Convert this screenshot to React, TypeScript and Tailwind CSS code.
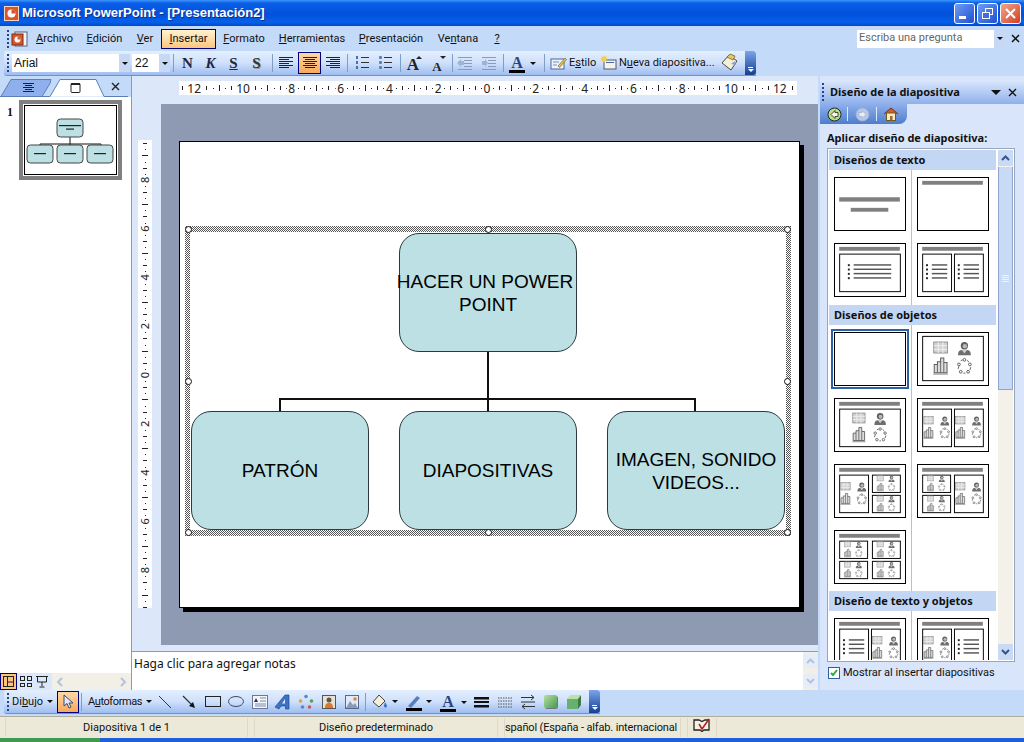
import type { ReactNode } from 'react';

const ui = "font-['Roboto',sans-serif] text-[11px] text-[#111]";
const bold = "font-['Noto_Sans',sans-serif] text-[11px] font-bold";

function Grip() {
  return (
    <div className="flex w-[3px] flex-col gap-[2px] py-[2px]">
      {[0, 1, 2, 3, 4].map((i) => (
        <span key={i} className="h-[2px] w-[2px] bg-[#27418a]" />
      ))}
    </div>
  );
}

function Sep({ ml = 'ml-0' }: { ml?: string }) {
  return <span className={`h-[18px] w-px bg-[#7f9dc9] ${ml}`} />;
}

function Handle() {
  return (
    <div className="flex h-full w-[11px] flex-col items-center justify-end rounded-r-[3px] bg-linear-to-b from-[#7ba5ea] to-[#173f91] pb-[3px]">
      <span className="mb-[1px] h-px w-[5px] bg-white" />
      <span className="h-0 w-0 border-x-[3px] border-t-[3px] border-x-transparent border-t-white" />
    </div>
  );
}

function Caret({ cls = 'border-t-[#111]' }: { cls?: string }) {
  return <span className={`inline-block h-0 w-0 border-x-[3px] border-t-[3px] border-x-transparent ${cls}`} />;
}

function Btn({ w = 'w-[23px]', active = false, children }: { w?: string; active?: boolean; children: ReactNode }) {
  return (
    <div
      className={`flex h-[22px] shrink-0 items-center justify-center ${w} ${
        active ? 'border border-[#000080] bg-linear-to-b from-[#fdd9a4] to-[#f8a85a]' : ''
      }`}
    >
      {children}
    </div>
  );
}

function Lines({ rows }: { rows: [number, number][] }) {
  return (
    <svg width="16" height="16" viewBox="0 0 16 16">
      {rows.map(([x, w], i) => (
        <rect key={i} x={x} y={2 + i * 2} width={w} height="1" fill="#222" />
      ))}
    </svg>
  );
}

function ListIcon({ numbered }: { numbered?: boolean }) {
  return (
    <svg width="16" height="16" viewBox="0 0 16 16">
      {[2, 7, 12].map((y) => (
        <g key={y}>
          <rect x="7" y={y} width="8" height="1" fill="#333" />
          {numbered ? (
            <rect x="2" y={y - 1} width="2" height="3" fill="#4a6ea9" />
          ) : (
            <rect x="2" y={y - 1} width="3" height="3" rx="1" fill="#5b7fb5" />
          )}
        </g>
      ))}
    </svg>
  );
}

function IndentIcon({ flip }: { flip?: boolean }) {
  return (
    <svg width="18" height="16" viewBox="0 0 18 16">
      {[2, 5, 8, 11, 14].map((y, i) => (
        <rect key={y} x={i > 0 && i < 4 ? 8 : 2} y={y} width={i > 0 && i < 4 ? 8 : 14} height="1" fill="#8a9bb5" />
      ))}
      <path d={flip ? 'M2 6h3V4l3 4-3 4v-2H2z' : 'M8 6H5V4L1 8l4 4v-2h3z'} fill="#9fb4d4" />
    </svg>
  );
}

function Big({ small, up }: { small?: boolean; up?: boolean }) {
  return (
    <div className="relative flex h-[20px] w-[18px] items-end justify-center">
      <span className={`font-['Liberation_Serif',serif] font-bold leading-none text-[#222] ${small ? 'text-[13px]' : 'text-[17px]'}`}>A</span>
      <span className={`absolute right-0 top-[3px] h-0 w-0 border-x-[3px] border-x-transparent ${up ? 'border-b-[3px] border-b-[#222]' : 'border-t-[3px] border-t-[#222]'}`} />
    </div>
  );
}

function ColorA({ bar = '#000' }: { bar?: string }) {
  return (
    <div className="flex h-[20px] w-[16px] flex-col items-center justify-end">
      <span className="font-['Liberation_Serif',serif] text-[16px] font-bold leading-[15px] text-[#25447f]">A</span>
      <span className="h-[3px] w-[16px]" style={{ backgroundColor: bar }} />
    </div>
  );
}

function FormatBar() {
  return (
    <div className="flex h-[25px] items-center bg-[#c3daf9] pl-[4px]">
      <div className="flex h-full w-[752px] items-center rounded-l-[3px] border-b border-[#6f93c9] bg-linear-to-b from-[#e3effe] via-[#cfe0fb] to-[#9ebdf0] pl-[3px]">
        <Grip />
        <div className="ml-[2px] flex h-[18px] w-[118px] items-center justify-between bg-white">
          <span className="pl-[2px] font-['Liberation_Sans',sans-serif] text-[12px]">Arial</span>
          <span className="flex h-full w-[11px] items-center justify-center bg-[#c6d8f4]"><Caret /></span>
        </div>
        <div className="ml-[2px] flex h-[18px] w-[38px] items-center justify-between bg-white">
          <span className="pl-[3px] font-['Liberation_Sans',sans-serif] text-[12px]">22</span>
          <span className="flex h-full w-[11px] items-center justify-center bg-[#c6d8f4]"><Caret /></span>
        </div>
        <Sep ml="ml-[3px]" />
        <div className="ml-[2px] flex font-['Liberation_Serif',serif] text-[15px] font-bold text-[#1c2740]">
          <Btn><span>N</span></Btn>
          <Btn><span className="italic">K</span></Btn>
          <Btn><span className="underline">S</span></Btn>
          <Btn><span className="text-[#333] [text-shadow:1px_1px_0_#999]">S</span></Btn>
        </div>
        <Sep ml="ml-[4px]" />
        <Btn w="w-[24px] ml-[1px]"><Lines rows={[[1, 14], [1, 10], [1, 14], [1, 10], [1, 14], [1, 10]]} /></Btn>
        <Btn w="w-[23px]" active><Lines rows={[[1, 14], [3, 10], [1, 14], [3, 10], [1, 14], [3, 10]]} /></Btn>
        <Btn><Lines rows={[[1, 14], [5, 10], [1, 14], [5, 10], [1, 14], [5, 10]]} /></Btn>
        <Sep ml="ml-[3px]" />
        <Btn w="w-[23px] ml-[2px]"><ListIcon numbered /></Btn>
        <Btn><ListIcon /></Btn>
        <Sep ml="ml-[4px]" />
        <Btn w="w-[24px]"><Big up /></Btn>
        <Btn w="w-[24px]"><Big small /></Btn>
        <Sep ml="ml-[3px]" />
        <Btn w="w-[24px]"><IndentIcon /></Btn>
        <Btn w="w-[24px]"><IndentIcon flip /></Btn>
        <Sep ml="ml-[2px]" />
        <div className="ml-[5px] flex w-[32px] items-center gap-[5px]">
          <ColorA />
          <Caret />
        </div>
        <Sep ml="ml-[3px]" />
        <div className="ml-[5px] flex w-[47px] items-center gap-[2px]">
          <svg width="17" height="16" viewBox="0 0 17 16">
            <rect x="1" y="4" width="13" height="10" fill="#eef3fb" stroke="#4b6a9c" />
            <path d="M3 7h6M3 10h4" stroke="#7a8fb0" />
            <path d="M8 11l7-8 1.5 1.5-7 8z" fill="#e9c24a" stroke="#6b5a20" strokeWidth=".6" />
          </svg>
          <span className="pt-px">E<span className="underline">s</span>tilo</span>
        </div>
        <div className="ml-[3px] flex w-[118px] items-center gap-[2px]">
          <svg width="17" height="16" viewBox="0 0 17 16">
            <rect x="4" y="5" width="12" height="9" fill="#f4f4ee" stroke="#4b5a74" />
            <rect x="6" y="7" width="8" height="1" fill="#4b6a9c" />
            <path d="M4 0l1 2 2-1-1 2 2 1-2 1 1 2-2-1-1 2-1-2-2 1 1-2-2-1 2-1-1-2 2 1z" fill="#f2cf4e" />
          </svg>
          <span className="whitespace-nowrap pt-px">N<span className="underline">u</span>eva diapositiva...</span>
        </div>
        <svg className="ml-[2px]" width="20" height="20" viewBox="0 0 20 20">
          <path d="M2 10l7-8 8 6-6 9z" fill="#f4efd8" stroke="#4a4a4a" />
          <path d="M7 4l3-3 5 2-2 4z" fill="#e8c85e" stroke="#5f5a2a" strokeWidth=".7" />
          <path d="M11 11l4-3 1 4z" fill="#88a3cf" />
        </svg>
        <div className="ml-auto h-full"><Handle /></div>
      </div>
    </div>
  );
}

function MenuBar() {
  const items: [ReactNode, string][] = [
    [<><u>A</u>rchivo</>, 'w-[51px]'],
    [<><u>E</u>dición</>, 'w-[49px]'],
    [<><u>V</u>er</>, 'w-[32px]'],
    [<><u>I</u>nsertar</>, 'w-[55px]'],
    [<><u>F</u>ormato</>, 'w-[56px]'],
    [<><u>H</u>erramientas</>, 'w-[80px]'],
    [<><u>P</u>resentación</>, 'w-[78px]'],
    [<>Ve<u>n</u>tana</>, 'w-[56px]'],
    [<u>?</u>, 'w-[22px]'],
  ];
  return (
    <div className="flex h-[25px] items-center bg-[#c3daf9] pl-[7px]">
      <Grip />
      <svg className="ml-[1px]" width="18" height="18" viewBox="0 0 18 18">
        <rect x="4" y="2" width="12" height="14" fill="#f6f6f6" stroke="#56607a" />
        <rect x="1" y="4" width="11" height="11" fill="#d9562b" stroke="#7a2c10" />
        <circle cx="6.5" cy="9.5" r="3" fill="#fff" />
        <path d="M6.5 9.5V6.5a3 3 0 0 1 3 3z" fill="#d9562b" />
      </svg>
      <div className="flex">
        {items.map(([label, w], i) => (
          <div
            key={i}
            className={`flex h-[20px] items-center justify-center pt-px ${w} ${
              i === 3 ? 'border border-[#000080] bg-linear-to-b from-[#fff3d0] to-[#fbc57e]' : ''
            }`}
          >
            <span className="whitespace-nowrap">{label}</span>
          </div>
        ))}
      </div>
      <div className="ml-auto flex h-[18px] w-[148px] items-center justify-between bg-white">
        <span className="pl-[2px] text-[#666]">Escriba una pregunta</span>
        <span className="flex h-full w-[11px] items-center justify-center bg-[#c6d8f4]"><Caret /></span>
      </div>
      <span className="ml-[3px] mr-[2px] flex w-[14px] justify-center">
        <svg width="9" height="9" viewBox="0 0 9 9"><path d="M1 1l7 7M8 1L1 8" stroke="#111" strokeWidth="1.5" /></svg>
      </span>
    </div>
  );
}

function WinBtn({ red, children }: { red?: boolean; children: ReactNode }) {
  return (
    <div
      className={`flex h-[21px] w-[21px] items-center justify-center rounded-[3px] border border-white ${
        red ? 'bg-linear-to-br from-[#f0a48c] to-[#d2391a]' : 'bg-linear-to-br from-[#6f9cf4] to-[#1f4fd0]'
      }`}
    >
      {children}
    </div>
  );
}

function TitleBar() {
  return (
    <div className="flex h-[26px] items-center bg-[linear-gradient(#3d95ff_0%,#0a5fe6_12%,#0250dc_55%,#0560ea_85%,#0048c8_100%)] pl-[4px] pr-[3px]">
      <svg width="15" height="15" viewBox="0 0 15 15">
        <rect x=".5" y=".5" width="14" height="14" fill="#d9562b" stroke="#f7d5c4" />
        <circle cx="7.5" cy="7.5" r="4" fill="#fff" />
        <path d="M7.5 7.5v-4a4 4 0 0 1 4 4z" fill="#d9562b" />
      </svg>
      <span className="ml-[3px] whitespace-nowrap font-['Liberation_Sans',sans-serif] text-[13px] font-bold text-white [text-shadow:1px_1px_0_#0a2f8a]">
        Microsoft PowerPoint - [Presentación2]
      </span>
      <div className="ml-auto flex gap-[2px]">
        <WinBtn><span className="mt-[8px] mr-[4px] h-[3px] w-[7px] bg-white" /></WinBtn>
        <WinBtn>
          <svg width="13" height="13" viewBox="0 0 13 13" fill="none" stroke="#fff">
            <rect x="4.5" y="1.5" width="7" height="6" /><rect x="1.5" y="5.5" width="7" height="6" fill="#3d6fe0" />
          </svg>
        </WinBtn>
        <WinBtn red>
          <svg width="11" height="11" viewBox="0 0 11 11"><path d="M1 1l9 9M10 1l-9 9" stroke="#fff" strokeWidth="2" /></svg>
        </WinBtn>
      </div>
    </div>
  );
}

function LeftPanel() {
  return (
    <div className="flex h-full w-[132px] shrink-0 flex-col border-r border-[#7f9dc9]">
      <div className="flex h-[21px] bg-[#c3daf9] pt-[3px]">
        <svg width="128" height="18" viewBox="0 0 128 18">
          <path d="M1 17.5L11 .5h40l-1 4-8 13z" fill="#8fb0ec" stroke="#5c7fb8" />
          <path d="M50 17.5L60 .5h36l8 17" fill="#fff" stroke="#5c7fb8" />
          <rect x="0" y="17" width="50" height="1" fill="#5c7fb8" />
          <rect x="104" y="17" width="24" height="1" fill="#5c7fb8" />
          {[4, 6, 8, 10, 12].map((y, i) => (
            <rect key={y} x={i % 2 ? 25 : 23} y={y} width={i % 2 ? 7 : 11} height="1" fill="#222" />
          ))}
          <rect x="71" y="4.5" width="9" height="9" rx="1" fill="#fff" stroke="#222" />
          <rect x="71" y="4" width="9" height="2" fill="#222" />
          <path d="M112 4l7 7M119 4l-7 7" stroke="#222" strokeWidth="1.4" />
        </svg>
      </div>
      <div className="flex flex-1 items-start bg-white pl-[7px] pt-[3px]">
        <span className="mt-[3px] font-['Liberation_Serif',serif] text-[12px] font-bold">1</span>
        <div className="ml-[6px] border-[4px] border-[#808080] bg-white p-px">
          <svg className="block" width="93" height="70" viewBox="0 0 93 70">
            <rect x=".5" y=".5" width="92" height="69" fill="#fff" stroke="#000" />
            <path d="M46 32v7M16 44v-5h61v5M46 39v5" fill="none" stroke="#111" />
            {[[33, 14], [3, 40], [33, 40], [63, 40]].map(([x, y], i) => (
              <g key={i}>
                <rect x={x} y={y} width="26" height="18" rx="3.5" fill="#bce0e3" stroke="#444" />
                <rect x={x + (i === 0 ? 2 : 7)} y={y + (i === 0 ? 6 : 8)} width={i === 0 ? 22 : 12} height="1.2" fill="#222" />
                {i === 0 && <rect x={x + 9} y={y + 9.5} width="8" height="1.2" fill="#222" />}
              </g>
            ))}
          </svg>
        </div>
      </div>
      <div className="flex h-[17px] items-center bg-[#dbe7fb]">
        <div className="flex h-[17px] w-[17px] items-center justify-center border border-[#000080] bg-[#fbc57e]">
          <svg width="13" height="13" viewBox="0 0 13 13" fill="none" stroke="#222"><rect x="1.5" y="1.5" width="10" height="10" /><path d="M5.5 2v9M5.5 7h6" /></svg>
        </div>
        <svg className="ml-[2px]" width="14" height="13" viewBox="0 0 14 13" fill="none" stroke="#222"><rect x="1.5" y="1.5" width="4" height="4" /><rect x="8.5" y="1.5" width="4" height="4" /><rect x="1.5" y="8.5" width="4" height="3" /><rect x="8.5" y="8.5" width="4" height="3" /></svg>
        <svg className="ml-[2px]" width="14" height="13" viewBox="0 0 14 13" fill="none" stroke="#222"><path d="M1 1.5h12M2.5 2v5h9V2M7 7v4M4.5 12h5" /></svg>
        <div className="ml-auto flex h-full w-[79px] items-center justify-between bg-[#f1efe6] px-[4px]">
          <svg width="8" height="10" viewBox="0 0 8 10" fill="none" stroke="#b4c3dc" strokeWidth="2"><path d="M6 1L2 5l4 4" /></svg>
          <svg width="8" height="10" viewBox="0 0 8 10" fill="none" stroke="#b4c3dc" strokeWidth="2"><path d="M2 1l4 4-4 4" /></svg>
        </div>
      </div>
    </div>
  );
}

function RulerH() {
  // one mark every 6.1px, numbers every 48.8px
  const marks = Array.from({ length: 101 }, (_, i) => i - 50);
  return (
    <svg className="block" width="618" height="14" viewBox="0 0 618 14">
      <rect width="618" height="14" fill="#fff" />
      {marks.map((m) => {
        const x = Math.round(308 + m * 6.1);
        if (m % 8 === 0) return null;
        if (m % 2 !== 0) return <rect key={m} x={x} y="7" width="1" height="1" fill="#222" />;
        return <rect key={m} x={x} y={m % 4 === 0 ? 4 : 5} width="1" height={m % 4 === 0 ? 6 : 4} fill="#222" />;
      })}
      {[12, 10, 8, 6, 4, 2, 0, 2, 4, 6, 8, 10, 12].map((n, i) => (
        <g key={i}>
          <rect x={308 + (i - 6) * 48.8 - (n > 9 ? 8 : 5)} y="0" width={n > 9 ? 16 : 10} height="14" fill="#fff" />
          <text x={308 + (i - 6) * 48.8} y="11.500" textAnchor="middle" fontSize="12" fontFamily="'Noto Sans',sans-serif" fill="#222">
            {n}
          </text>
        </g>
      ))}
    </svg>
  );
}

function RulerV() {
  const marks = Array.from({ length: 77 }, (_, i) => i - 38);
  return (
    <svg className="block" width="14" height="468" viewBox="0 0 14 468">
      <rect width="14" height="468" fill="#fff" />
      {marks.map((m) => {
        const y = Math.round(235 + m * 6.1);
        if (m % 8 === 0) return null;
        if (m % 2 !== 0) return <rect key={m} x="7" y={y} width="1" height="1" fill="#222" />;
        return <rect key={m} x={m % 4 === 0 ? 4 : 5} y={y} width={m % 4 === 0 ? 6 : 4} height="1" fill="#222" />;
      })}
      {[8, 6, 4, 2, 0, 2, 4, 6, 8].map((n, i) => {
        const y = 235 + (i - 4) * 48.8;
        return (
          <text key={i} x="7" y={y} transform={`rotate(-90 7 ${y})`} dy="4" textAnchor="middle" fontSize="11" fontFamily="'Noto Sans',sans-serif" fill="#222">
            {n}
          </text>
        );
      })}
    </svg>
  );
}

function Node({ children }: { children: ReactNode }) {
  return (
    <div className="flex h-[119px] w-[178px] items-center justify-center rounded-[20px] border border-[#2b3a40] bg-[#bce0e3] text-center font-['Liberation_Sans',sans-serif] text-[19px] leading-[23px] text-black">
      {children}
    </div>
  );
}

function Dot({ cls }: { cls: string }) {
  return <span className={`absolute h-[7px] w-[7px] rounded-full border border-[#111] bg-white ${cls}`} />;
}

function Slide() {
  return (
    <div className="ml-[18px] mt-[37px] h-[467px] w-[621px] border border-black bg-white pl-[5px] pt-[84px] shadow-[4px_4px_0_#000]">
      <div className="relative h-[310px] w-[606px] bg-[repeating-conic-gradient(#555_0_25%,#fff_0_50%)] bg-[length:2px_2px] px-[5px] py-[6px]">
        <div className="flex h-[298px] flex-col items-center bg-white px-px pt-px">
          <Node>
            <span className="whitespace-nowrap"><span className="pr-[6px]">HACER UN POWER</span><br />POINT</span>
          </Node>
          <svg className="block shrink-0" width="594" height="59" viewBox="0 0 594 59">
            <path d="M297 0v59M89 59V47h415v12" fill="none" stroke="#111" strokeWidth="2" />
          </svg>
          <div className="flex w-full justify-between">
            <Node>PATRÓN</Node>
            <Node>DIAPOSITIVAS</Node>
            <Node>
              <span>IMAGEN, SONIDO<br />VIDEOS...</span>
            </Node>
          </div>
        </div>
        <Dot cls="left-0 top-0" />
        <Dot cls="left-[300px] top-0" />
        <Dot cls="right-0 top-0" />
        <Dot cls="left-0 top-[152px]" />
        <Dot cls="right-0 top-[152px]" />
        <Dot cls="bottom-0 left-0" />
        <Dot cls="bottom-0 left-[300px]" />
        <Dot cls="bottom-0 right-0" />
      </div>
    </div>
  );
}

function Editor() {
  return (
    <div className="flex h-full w-[686px] shrink-0 flex-col bg-[#dce7fa]">
      <div className="h-[28px] pl-[47px] pt-[5px]">
        <RulerH />
      </div>
      <div className="flex h-[541px]">
        <div className="w-[29px] pl-[6px] pt-[36px]">
          <RulerV />
        </div>
        <div className="flex-1 bg-[#8e99b2]">
          <Slide />
        </div>
      </div>
      <div className="mt-[6px] flex flex-1 border-t border-[#7f9dc9] bg-white">
        <div className="flex-1 pl-[2px] pt-[3px]">
          <span className="font-['Noto_Sans',sans-serif] text-[12px]">Haga clic para agregar notas</span>
        </div>
        <div className="flex w-[15px] flex-col justify-between bg-[#f1efe6] py-[2px]">
          <span className="flex h-[14px] items-center justify-center bg-[#e6edf9]">
            <svg width="9" height="6" viewBox="0 0 9 6" fill="none" stroke="#b4c3dc" strokeWidth="2"><path d="M1 5l3.5-3.5L8 5" /></svg>
          </span>
          <span className="flex h-[14px] items-center justify-center bg-[#e6edf9]">
            <svg width="9" height="6" viewBox="0 0 9 6" fill="none" stroke="#b4c3dc" strokeWidth="2"><path d="M1 1l3.5 3.5L8 1" /></svg>
          </span>
        </div>
      </div>
    </div>
  );
}

// 42x36 glyph of the four content kinds: table, person, chart, cycle
function Glyph({ cx, cy, s }: { cx: number; cy: number; s: number }) {
  return (
    <g transform={`translate(${cx - 21 * s} ${cy - 18 * s}) scale(${s})`}>
      <rect x=".5" y=".5" width="15" height="12" fill="#d2d2d2" stroke="#8a8a8a" />
      <path d="M.5 4.500h15M.5 8.500h15M5.500.5v12M10.500.5v12" stroke="#f2f2f2" fill="none" />
      <path d="M27 15c0-5 2-6 7-6s7 1 7 6z" fill="#6e6e6e" />
      <path d="M31 9l3 4 3-4z" fill="#cfcfcf" />
      <circle cx="34" cy="4.500" r="4" fill="#5e5e5e" />
      <circle cx="34.500" cy="5" r="2.400" fill="#b8b8b8" />
      <path d="M1 34v-9h3.500v-3H8v-4h3.500v5H15v11z" fill="#dcdcdc" stroke="#5f5f5f" strokeWidth="1.100" />
      <path d="M4.500 25v9M8 22v12M11.500 23v11" stroke="#5f5f5f" />
      <path d="M0 35.500h16" stroke="#777" />
      {[[34, 20], [28, 25], [40, 25], [30, 33], [38, 33]].map(([x, y], i) => (
        <circle key={i} cx={x} cy={y} r="1.500" fill="#fff" stroke="#555" />
      ))}
      <path d="M30 21l2-1M37 20.500l2 2M41 28l-1 3M33 34.500h2M27 30l1-3" stroke="#555" fill="none" />
    </g>
  );
}

function Frame({ x, y, w, h, s }: { x: number; y: number; w: number; h: number; s: number }) {
  return (
    <g>
      <rect x={x + 0.5} y={y + 0.5} width={w} height={h} fill="#fff" stroke="#000" />
      <Glyph cx={x + w / 2} cy={y + h / 2} s={s} />
    </g>
  );
}

function ListFrame({ x, y, w, h }: { x: number; y: number; w: number; h: number }) {
  const left = w > 40 ? 9 : 4;
  const right = w > 40 ? 9 : 4;
  return (
    <g>
      <rect x={x + 0.5} y={y + 0.5} width={w} height={h} fill="#fff" stroke="#000" />
      {[11, 15.500, 20, 24.500].map((dy) => (
        <g key={dy}>
          <rect x={x + left} y={y + dy} width="2" height="2" fill="#222" />
          <rect x={x + left + 6} y={y + dy} width={w - left - right - 6} height="1.500" fill="#555" />
        </g>
      ))}
    </g>
  );
}

const Bar = () => <rect x="4" y="3" width="63" height="4" fill="#808080" />;

const layouts: ReactNode[] = [
  <><rect x="4" y="20" width="63" height="4.500" fill="#808080" /><rect x="16" y="31" width="39" height="4" fill="#808080" /></>,
  <Bar />,
  <><Bar /><ListFrame x={4} y={10} w={63} h={39} /></>,
  <><Bar /><ListFrame x={4} y={10} w={30} h={39} /><ListFrame x={37} y={10} w={30} h={39} /></>,
  null,
  <Frame x={4} y={3} w={63} h={46} s={0.95} />,
  <><Bar /><Frame x={4} y={10} w={63} h={39} s={0.85} /></>,
  <><Bar /><Frame x={4} y={10} w={30} h={39} s={0.65} /><Frame x={37} y={10} w={30} h={39} s={0.65} /></>,
  <><Bar /><Frame x={4} y={10} w={30} h={39} s={0.65} /><Frame x={38} y={10} w={29} h={18} s={0.45} /><Frame x={38} y={31} w={29} h={18} s={0.45} /></>,
  <><Bar /><Frame x={4} y={10} w={29} h={18} s={0.45} /><Frame x={4} y={31} w={29} h={18} s={0.45} /><Frame x={37} y={10} w={30} h={39} s={0.65} /></>,
  <><Bar /><Frame x={4} y={10} w={29} h={18} s={0.45} /><Frame x={38} y={10} w={29} h={18} s={0.45} /><Frame x={4} y={31} w={29} h={18} s={0.45} /><Frame x={38} y={31} w={29} h={18} s={0.45} /></>,
  <><Bar /><ListFrame x={4} y={10} w={30} h={39} /><Frame x={37} y={10} w={30} h={39} s={0.65} /></>,
  <><Bar /><Frame x={4} y={10} w={30} h={39} s={0.65} /><ListFrame x={37} y={10} w={30} h={39} /></>,
];

function Thumb({ i, selected }: { i: number; selected?: boolean }) {
  return (
    <div className={selected ? 'relative' : ''}>
      {selected && <span className="absolute -inset-[3px] border-[2px] border-[#2a62a8]" />}
      <svg className="relative block border border-black bg-white" width="72" height="54" viewBox="0 0 72 54">
        {layouts[i]}
      </svg>
    </div>
  );
}

function SectionHead({ children }: { children: ReactNode }) {
  return (
    <div className={`mr-[2px] flex h-[20px] items-center bg-[#c3d7f5] pl-[5px] ${bold}`}>{children}</div>
  );
}

function ThumbGrid({ ids, selected, pb = 'pb-[7px]' }: { ids: number[]; selected?: number; pb?: string }) {
  return (
    <div className={`bg-[linear-gradient(#b8c0cc,#b8c0cc)] bg-[length:1px_100%] bg-[position:82px_0] bg-no-repeat pt-[7px] ${pb}`}>
      <div className="grid grid-cols-[72px_72px] gap-x-[11px] gap-y-[12px] pl-[5px]">
        {ids.map((id) => (
          <Thumb key={id} i={id} selected={id === selected} />
        ))}
      </div>
    </div>
  );
}

function TaskPane() {
  return (
    <div className="ml-[2px] flex h-full w-[204px] shrink-0 flex-col bg-[#d9e5fa] pt-[4px]">
      <div className="flex h-[24px] items-center bg-linear-to-b from-[#dce8fc] to-[#8fb0ec] pl-[2px] pr-[7px]">
        <Grip />
        <span className={`ml-[5px] ${bold}`}>Diseño de la diapositiva</span>
        <span className="ml-auto h-0 w-0 border-x-[5px] border-t-[5px] border-x-transparent border-t-[#111]" />
        <svg className="ml-[7px]" width="9" height="9" viewBox="0 0 9 9"><path d="M1 1l7 7M8 1L1 8" stroke="#111" strokeWidth="1.4" /></svg>
      </div>
      <div className="flex h-[20px] w-[87px] items-center gap-[5px] rounded-br-[8px] bg-linear-to-b from-[#8fb0ec] to-[#4f7dcb] pl-[7px]">
        <svg width="15" height="15" viewBox="0 0 15 15">
          <circle cx="7.5" cy="7.5" r="6.5" fill="#b8e27e" stroke="#223" />
          <path d="M8 3.5L4 7.5l4 4V9.5h3v-4H8z" fill="#f4f8e0" stroke="#223" strokeWidth=".8" />
        </svg>
        <span className="h-[14px] w-px bg-[#dfe9fb]" />
        <svg className="ml-[2px]" width="15" height="15" viewBox="0 0 15 15">
          <circle cx="7.5" cy="7.5" r="6.5" fill="#b9c8e6" stroke="#9eb0d2" />
          <path d="M7 3.5l4 4-4 4V9.5H4v-4h3z" fill="#e7edf8" stroke="#9eb0d2" strokeWidth=".8" />
        </svg>
        <span className="ml-[1px] h-[14px] w-px bg-[#dfe9fb]" />
        <svg className="ml-[1px]" width="16" height="16" viewBox="0 0 16 16">
          <path d="M1 8l7-6 7 6" fill="#d85a2a" stroke="#7a3210" />
          <rect x="3.5" y="7" width="9" height="7.5" fill="#f6ecc0" stroke="#6b5a20" />
          <rect x="7" y="10" width="2.5" height="4.5" fill="#a56a2a" />
        </svg>
      </div>
      <div className={`pl-[7px] pt-[7px] leading-[14px] ${bold}`}>Aplicar diseño de diapositiva:</div>
      <div className="ml-[7px] mt-[3px] flex h-[514px] w-[188px] border border-[#9aa6b8] bg-white p-px">
        <div className="w-[169px] overflow-hidden">
          <SectionHead>Diseños de texto</SectionHead>
          <ThumbGrid ids={[0, 1, 2, 3]} pb="pb-[8px]" />
          <SectionHead>Diseños de objetos</SectionHead>
          <ThumbGrid ids={[4, 5, 6, 7, 8, 9, 10]} selected={4} />
          <SectionHead>Diseño de texto y objetos</SectionHead>
          <ThumbGrid ids={[11, 12]} />
        </div>
        <div className="flex flex-1 flex-col bg-[#f3f1ea]">
          <span className="flex h-[16px] items-center justify-center bg-[#c9daf6]">
            <svg width="9" height="6" viewBox="0 0 9 6" fill="none" stroke="#3a5488" strokeWidth="2"><path d="M1 5l3.5-3.5L8 5" /></svg>
          </span>
          <span className="mt-px flex h-[223px] flex-col items-center justify-center gap-px border-x border-b border-[#8fa5cf] bg-[#c9daf6]">
            {[0, 1, 2, 3].map((i) => (
              <span key={i} className="h-px w-[7px] bg-[#eef4fd]" />
            ))}
          </span>
          <span className="mt-auto flex h-[16px] items-center justify-center bg-[#c9daf6]">
            <svg width="9" height="6" viewBox="0 0 9 6" fill="none" stroke="#3a5488" strokeWidth="2"><path d="M1 1l3.5 3.5L8 1" /></svg>
          </span>
        </div>
      </div>
      <div className="ml-[8px] mt-[2px] flex items-center gap-[3px]">
        <span className="flex h-[12px] w-[12px] items-center justify-center border border-[#2f5fa0] bg-white">
          <svg width="10" height="10" viewBox="0 0 10 10" fill="none" stroke="#2fa83a" strokeWidth="2"><path d="M2 5l2 2 4-5" /></svg>
        </span>
        <span className="pt-px">Mostrar al insertar diapositivas</span>
      </div>
    </div>
  );
}

function DrawBar() {
  return (
    <div className="flex h-[26px] items-start bg-[#c3daf9] pl-[4px]">
      <div className="flex h-[24px] w-[596px] items-center rounded-l-[3px] border-b border-[#6f93c9] bg-linear-to-b from-[#e3effe] via-[#cfe0fb] to-[#9ebdf0] pl-[3px]">
        <Grip />
        <span className="ml-[2px] w-[35px] whitespace-nowrap pt-px">Di<u>b</u>ujo</span>
        <Caret />
        <Btn w="w-[22px] ml-[4px]" active>
          <svg width="14" height="16" viewBox="0 0 14 16"><path d="M3 1v11l3-2.5L8 14l2-1-2-4h4z" fill="#dfe9fb" stroke="#3a4a6a" /></svg>
        </Btn>
        <Sep ml="ml-[2px]" />
        <span className="ml-[6px] w-[57px] whitespace-nowrap pt-px tracking-[-0.4px]">A<u>u</u>toformas</span>
        <span className="ml-px flex"><Caret /></span>
        <Btn w="w-[23px] ml-px">
          <svg width="14" height="14" viewBox="0 0 14 14"><path d="M1 1l12 12" stroke="#333" /></svg>
        </Btn>
        <Btn w="w-[26px]">
          <svg width="14" height="14" viewBox="0 0 14 14"><path d="M1 1l9 9" stroke="#333" strokeWidth="1.2" /><path d="M13 13l-6-2 4-4z" fill="#111" /></svg>
        </Btn>
        <Btn><svg width="17" height="13" viewBox="0 0 17 13"><rect x=".5" y="1.5" width="15" height="10" fill="none" stroke="#222" /></svg></Btn>
        <Btn><svg width="17" height="13" viewBox="0 0 17 13"><ellipse cx="8" cy="6.5" rx="7.5" ry="5" fill="none" stroke="#3c4a66" /></svg></Btn>
        <Btn>
          <svg width="16" height="14" viewBox="0 0 16 14">
            <rect x=".5" y=".5" width="15" height="13" fill="#f4f6fb" stroke="#6a7a96" />
            <path d="M8 3h6M8 6h6M3 9h11M3 11h11" stroke="#7a8aa6" />
            <path d="M4 3l2 4H2z" fill="#334" />
          </svg>
        </Btn>
        <Btn>
          <svg width="18" height="18" viewBox="0 0 18 18"><path d="M1 14L11 2h4v14h-3.5V13H7l-2 3z" fill="#3e72c4" stroke="#1f4a90" strokeWidth=".7" /><path d="M11 6L8 10.500h3z" fill="#dfe9fb" /></svg>
        </Btn>
        <Btn>
          <svg width="16" height="16" viewBox="0 0 16 16">
            <circle cx="8" cy="2.500" r="1.800" fill="#5b86c6" /><circle cx="2.500" cy="7" r="1.800" fill="#d9a441" /><circle cx="13.500" cy="7" r="1.800" fill="#5ba04c" /><circle cx="4.500" cy="13" r="1.800" fill="#5b86c6" /><circle cx="11.500" cy="13" r="1.800" fill="#c65b5b" />
          </svg>
        </Btn>
        <Btn>
          <svg width="16" height="16" viewBox="0 0 16 16"><rect x="1.500" y="1.500" width="13" height="13" fill="#e6e2d8" stroke="#555" /><circle cx="8" cy="6" r="2.500" fill="#6b5142" /><path d="M4 14c0-4 1.500-5 4-5s4 1 4 5z" fill="#d8782e" /></svg>
        </Btn>
        <Btn>
          <svg width="16" height="16" viewBox="0 0 16 16"><rect x="1.500" y="1.500" width="13" height="13" fill="#dfeafa" stroke="#5a6a86" /><circle cx="11" cy="5" r="1.800" fill="#e8823a" /><path d="M2 14l4-7 3 4 2-2 3 5z" fill="#8a9bb5" /></svg>
        </Btn>
        <Sep ml="ml-[2px]" />
        <Btn w="w-[24px] ml-[2px]">
          <svg width="18" height="18" viewBox="0 0 18 18"><path d="M2 9l6-7 6 6-6 6z" fill="#f4efd8" stroke="#444" /><path d="M14 9c1 2 2 3 2 4a1.500 1.500 0 0 1-3 0c0-1 .500-2 1-4z" fill="#3e72c4" /><rect x="1" y="15" width="14" height="3" fill="#a9c4ee" /></svg>
        </Btn>
        <Caret />
        <Btn w="w-[24px] ml-[4px]">
          <svg width="18" height="18" viewBox="0 0 18 18"><path d="M3 13l9-10 3 2-9 10z" fill="#5a7fc0" /><rect x="1" y="15" width="16" height="3" fill="#000" /></svg>
        </Btn>
        <Caret />
        <div className="ml-[8px] flex w-[16px]"><ColorA /></div>
        <span className="ml-[5px]"><Caret /></span>
        <Btn w="w-[23px] ml-[3px]"><svg width="16" height="12" viewBox="0 0 16 12"><rect y="1" width="15" height="2.500" fill="#111" /><rect y="5" width="15" height="2" fill="#111" /><rect y="9" width="15" height="2.500" fill="#111" /></svg></Btn>
        <Btn><svg width="16" height="12" viewBox="0 0 16 12"><path d="M1 2h14M1 5h14M1 8h14M1 11h14" stroke="#555" strokeDasharray="1.500 1" /></svg></Btn>
        <Btn><svg width="16" height="16" viewBox="0 0 16 16" fill="none" stroke="#333"><path d="M1 3.500h13M11 1l3 2.500L11 6M1 8h14M15 12.500H2M5 10l-3 2.500L5 15" /></svg></Btn>
        <Btn><span className="h-[13px] w-[13px] rounded-[2px] bg-linear-to-br from-[#b8e0a4] to-[#3f9a4f] shadow-[1px_1px_0_#777]" /></Btn>
        <Btn>
          <svg width="16" height="16" viewBox="0 0 16 16"><path d="M1 5l3-4h11l-3 4z" fill="#bde0a8" /><path d="M12 5l3-4v10l-3 4z" fill="#3a7a44" /><rect x="1" y="5" width="11" height="10" fill="#68b070" /></svg>
        </Btn>
        <div className="ml-auto h-full"><Handle /></div>
      </div>
    </div>
  );
}

function StatusBar() {
  return (
    <div className="flex h-[22px] items-center gap-[6px] border-t border-[#b0ad9c] bg-[#ece9d8] pl-[5px]">
      <div className="flex h-[19px] w-[243px] items-center justify-center border-x border-[#dcd9c8] pt-px">Diapositiva 1 de 1</div>
      <div className="flex h-[19px] w-[244px] items-center justify-center border-x border-[#dcd9c8] pt-px">Diseño predeterminado</div>
      <div className="flex h-[19px] w-[177px] items-center overflow-hidden whitespace-nowrap border-x border-[#dcd9c8] pt-px tracking-[-0.15px]">spañol (España - alfab. internacional</div>
      <div className="flex h-[19px] w-[30px] items-start justify-center border-x border-[#dcd9c8]">
        <svg width="20" height="16" viewBox="0 0 20 16" fill="none">
          <path d="M2 2h5l3 1.500L13 2h4v10h-5l-2 1.500L8 12H2z" fill="#f6f3e6" stroke="#222" strokeWidth="1.300" />
          <path d="M7 6l3 5 7-10" stroke="#b02020" strokeWidth="1.500" />
        </svg>
      </div>
    </div>
  );
}

export default function App() {
  return (
    <div className={`flex h-[742px] w-[1024px] flex-col overflow-hidden bg-[#c3daf9] ${ui}`}>
      <TitleBar />
      <MenuBar />
      <FormatBar />
      <div className="flex h-[614px]">
        <LeftPanel />
        <Editor />
        <TaskPane />
      </div>
      <DrawBar />
      <StatusBar />
      <div className="flex h-[4px]">
        <span className="w-[100px] bg-[#3f9a4f]" />
        <span className="flex-1 bg-[#1f5fd8]" />
      </div>
    </div>
  );
}
